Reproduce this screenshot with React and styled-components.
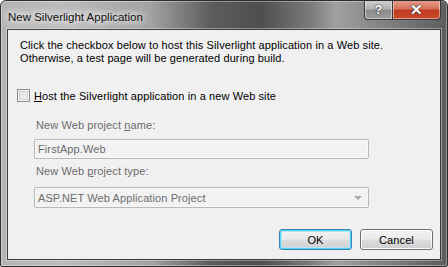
import React from "react";
import styled, { createGlobalStyle } from "styled-components";

const Global = createGlobalStyle`
  html, body { margin: 0; padding: 0; background: #ffffff; }
  body { width: 448px; height: 267px; overflow: hidden; }
`;

const Window = styled.div`
  box-sizing: border-box;
  width: 448px;
  height: 267px;
  display: flex;
  flex-direction: column;
  border: 1px solid #2e2e2e;
  border-radius: 6px 6px 2px 2px;
  background:
    linear-gradient(90deg,
      #b4b4b4 0px, #bcbcbc 60px, #a2a2a2 150px, #5c5c5c 210px,
      #4e4e4e 260px, #7c7c7c 310px, #a0a0a0 335px, #8a8a8a 370px,
      #6c6c6c 420px, #5c5c5c 448px);
  box-shadow: inset 0 0 0 1px rgba(255,255,255,0.35);
  overflow: hidden;
`;

const TitleBar = styled.div`
  height: 28px;
  flex: none;
  display: flex;
  align-items: flex-start;
  justify-content: space-between;
  position: relative;
`;

const Title = styled.div`
  margin: 9px 0 0 7px;
  font-family: "Liberation Sans", Arial, sans-serif;
  font-size: 11.5px;
  line-height: 14px;
  color: #101010;
  padding: 0 4px 0 0;
  text-shadow: 0 0 6px #ffffff, 0 0 10px #ffffff, 0 0 14px #ffffff;
`;

const Captions = styled.div`
  display: flex;
  margin: -1px 6px 0 0;
`;

const CapButton = styled.div`
  box-sizing: border-box;
  height: 20px;
  width: ${(p) => p.$w}px;
  display: flex;
  align-items: center;
  justify-content: center;
  font-family: "Liberation Sans", Arial, sans-serif;
  font-weight: bold;
  font-size: ${(p) => (p.$close ? 15 : 13)}px;
  color: #ffffff;
  border: 1px solid #3a3a3a;
  border-top: none;
  border-radius: ${(p) => (p.$close ? "0 0 4px 0" : "0 0 0 4px")};
  border-left: ${(p) => (p.$close ? "none" : "1px solid #3a3a3a")};
  text-shadow: 0 0 2px #333, 0 0 1px #222;
  background: ${(p) =>
    p.$close
      ? "linear-gradient(180deg, #e4a08f 0%, #d5735c 45%, #c13b1f 55%, #c94a2c 100%)"
      : "linear-gradient(180deg, #d2d2d2 0%, #b4b4b4 45%, #8c8c8c 55%, #9c9c9c 100%)"};
  box-shadow: inset 0 0 0 1px rgba(255,255,255,0.45);
`;

const Client = styled.div`
  flex: 1;
  margin: 0 6px 6px 6px;
  border: 1px solid #3c3c3c;
  background: #f0f0f0;
  display: flex;
  flex-direction: column;
  font-family: "Liberation Sans", Arial, sans-serif;
  font-size: 11px;
  letter-spacing: 0.1px;
  color: #000000;
  box-shadow: 0 0 0 1px rgba(255,255,255,0.35);
`;

const Para = styled.p`
  margin: 9px 0 0 12px;
  line-height: 13px;
`;

const CheckRow = styled.label`
  display: flex;
  align-items: center;
  gap: 4px;
  margin: 24px 0 0 9px;
  height: 13px;
`;

const Box = styled.span`
  box-sizing: border-box;
  width: 13px;
  height: 13px;
  border: 1px solid #8e8f8f;
  background: linear-gradient(135deg, #dcdcdc 0%, #f6f6f6 100%);
  box-shadow: inset 0 0 0 1px #f4f4f4, inset 0 0 0 2px #d2d2d2;
`;

const Key = styled.span`
  text-decoration: underline;
`;

const FieldLabel = styled.div`
  margin: ${(p) => p.$top}px 0 0 28px;
  line-height: 13px;
  color: #6d6d6d;
`;

const TextBox = styled.div`
  box-sizing: border-box;
  margin: ${(p) => p.$top}px 0 0 26px;
  width: 335px;
  height: ${(p) => p.$h}px;
  border: 1px solid #b9b9b9;
  border-radius: 2px;
  background: #f2f2f2;
  color: #6d6d6d;
  display: flex;
  align-items: center;
  justify-content: space-between;
  padding: 0 6px 0 3px;
  box-shadow: inset 0 0 0 1px #f7f7f7;
`;

const Arrow = styled.span`
  width: 0;
  height: 0;
  border-left: 4px solid transparent;
  border-right: 4px solid transparent;
  border-top: 4px solid #a9a9a9;
  margin-top: 1px;
`;

const ButtonRow = styled.div`
  display: flex;
  justify-content: flex-end;
  gap: 8px;
  margin: 21px 7px 0 0;
`;

const Button = styled.div`
  box-sizing: border-box;
  width: 73px;
  height: 21px;
  display: flex;
  align-items: center;
  justify-content: center;
  border: 1px solid ${(p) => (p.$def ? "#3c7fb1" : "#707070")};
  border-radius: 3px;
  background: linear-gradient(180deg, #f2f2f2 0%, #ebebeb 48%, #dddddd 52%, #cfcfcf 100%);
  box-shadow: ${(p) =>
    p.$def
      ? "inset 0 0 0 1px #48d8fb, inset 0 0 0 2px #bbe6f6"
      : "inset 0 0 0 1px #fcfcfc"};
  color: #000;
`;

export default function App() {
  return (
    <>
      <Global />
      <Window>
        <TitleBar>
          <Title>New Silverlight Application</Title>
          <Captions>
            <CapButton $w={29}>?</CapButton>
            <CapButton $w={48} $close>✕</CapButton>
          </Captions>
        </TitleBar>
        <Client>
          <Para>
            Click the checkbox below to host this Silverlight application in a Web site.
            <br />
            Otherwise, a test page will be generated during build.
          </Para>
          <CheckRow>
            <Box />
            <span>
              <Key>H</Key>ost the Silverlight application in a new Web site
            </span>
          </CheckRow>
          <FieldLabel $top={17}>
            New Web project <Key>n</Key>ame:
          </FieldLabel>
          <TextBox $top={7} $h={20}>FirstApp.Web</TextBox>
          <FieldLabel $top={6}>
            New Web <Key>p</Key>roject type:
          </FieldLabel>
          <TextBox $top={9} $h={21}>
            <span>ASP.NET Web Application Project</span>
            <Arrow />
          </TextBox>
          <ButtonRow>
            <Button $def>OK</Button>
            <Button>Cancel</Button>
          </ButtonRow>
        </Client>
      </Window>
    </>
  );
}
